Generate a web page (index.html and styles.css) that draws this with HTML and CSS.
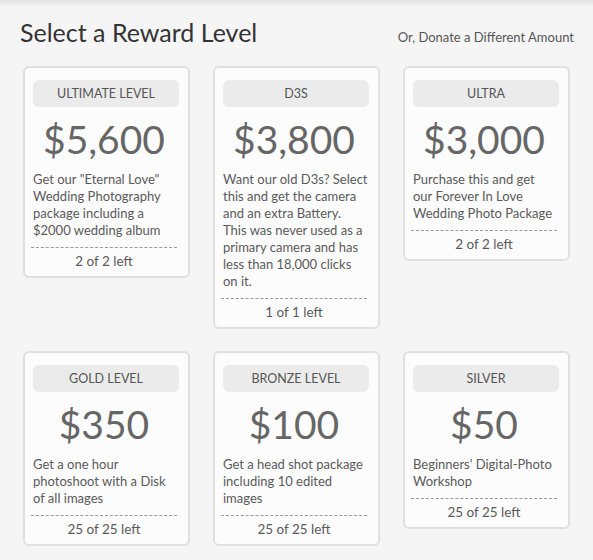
FILE: index.html
```html
<!DOCTYPE html>
<html>
<head>
    <meta charset="utf-8">
    <title>Select a Reward Level</title>
    <link rel="stylesheet" href="styles.css">
</head>
<body>

    <div class="page">
        <div class="head">
            <h1>Select a Reward Level</h1>
            <a href="#" class="donate">Or, Donate a Different Amount</a>
        </div>

        <div class="rewards">
            <div class="reward">
                <div class="level">Ultimate Level</div>
                <div class="price">$5,600</div>
                <p class="desc">Get our "Eternal Love"<br>Wedding Photography<br>package including a<br>$2000 wedding album</p>
                <div class="left">2 of 2 left</div>
            </div>
            <div class="reward">
                <div class="level">D3s</div>
                <div class="price">$3,800</div>
                <p class="desc">Want our old D3s? Select<br>this and get the camera<br>and an extra Battery.<br>This was never used as a<br>primary camera and has<br>less than 18,000 clicks<br>on it.</p>
                <div class="left">1 of 1 left</div>
            </div>
            <div class="reward">
                <div class="level">Ultra</div>
                <div class="price">$3,000</div>
                <p class="desc">Purchase this and get<br>our Forever In Love<br>Wedding Photo Package</p>
                <div class="left">2 of 2 left</div>
            </div>
            <div class="reward">
                <div class="level">Gold Level</div>
                <div class="price">$350</div>
                <p class="desc">Get a one hour<br>photoshoot with a Disk<br>of all images</p>
                <div class="left">25 of 25 left</div>
            </div>
            <div class="reward">
                <div class="level">Bronze Level</div>
                <div class="price">$100</div>
                <p class="desc">Get a head shot package<br>including 10 edited<br>images</p>
                <div class="left">25 of 25 left</div>
            </div>
            <div class="reward">
                <div class="level">Silver</div>
                <div class="price">$50</div>
                <p class="desc">Beginners' Digital-Photo<br>Workshop</p>
                <div class="left">25 of 25 left</div>
            </div>
        </div>
    </div>

</body>
</html>
```

FILE: styles.css
```css
body {
    margin: 0;
    font-family: Lato, "Open Sans", sans-serif;
    color: #5a5a5a;
    background: linear-gradient(to bottom, #e2e2e2 0, #f5f5f5 7px) no-repeat, #f5f5f5;
}

.page {
    padding: 17px 19px 20px 20px;
}

.head {
    display: flex;
    justify-content: space-between;
    align-items: baseline;
}

h1 {
    margin: 0;
    font-size: 25px;
    line-height: 30px;
    font-weight: normal;
    color: #333;
}

.donate {
    font-size: 13px;
    color: #555;
    text-decoration: none;
}

.rewards {
    display: grid;
    grid-template-columns: repeat(3, 167px);
    column-gap: 23px;
    row-gap: 22px;
    align-items: start;
    margin: 19px 0 0 3px;
}

.reward {
    background: #fcfcfc;
    border: 2px solid #e0e0e0;
    border-radius: 6px;
    padding: 12px 11px 6px 6px;
}

.level {
    margin: 0 -2px 0 2px;
    height: 27px;
    line-height: 27px;
    background: #ebebeb;
    border-radius: 6px;
    text-align: center;
    font-size: 12.5px;
    text-transform: uppercase;
    color: #555;
}

.price {
    margin-top: 10px;
    font-size: 39px;
    line-height: 44px;
    text-align: center;
    color: #666;
}

.desc {
    margin: 10px 0 0 0;
    padding-left: 2px;
    font-size: 13px;
    line-height: 17px;
    white-space: nowrap;
}

.left {
    margin-top: 8px;
    padding-top: 5px;
    border-top: 1px dashed #999;
    font-size: 13.5px;
    line-height: 17px;
    text-align: center;
}
```
